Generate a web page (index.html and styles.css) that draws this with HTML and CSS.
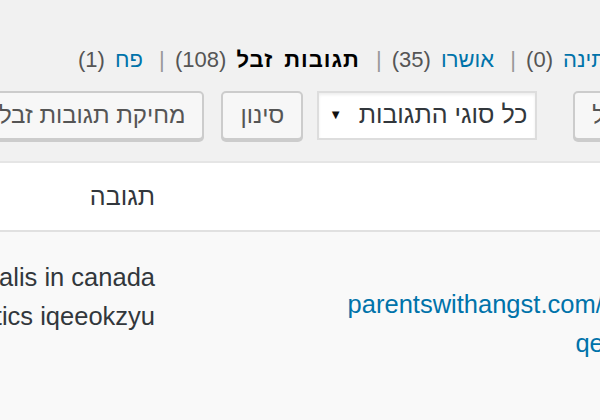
FILE: index.html
```html
<!DOCTYPE html>
<html lang="he" dir="rtl">

<head>
    <meta charset="UTF-8">
    <meta name="viewport" content="width=device-width, initial-scale=1.0">
    <title>תגובות</title>
    <link rel="stylesheet" href="styles.css">
</head>

<body>
    <div class="wrap">
        <ul class="subsubsub">
            <li><a href="#">הכל <span class="count">(144)</span></a> <span class="sep">|</span></li>
            <li><a href="#">ממתינה <span class="count">(0)</span></a> <span class="sep">|</span></li>
            <li><a href="#">אושרו <span class="count">(35)</span></a> <span class="sep">|</span></li>
            <li><a href="#" class="current"><b>תגובות זבל</b> <span class="count">(108)</span></a> <span class="sep">|</span></li>
            <li><a href="#">פח <span class="count">(1)</span></a></li>
        </ul>

        <div class="tablenav">
            <div class="actions">
                <div class="select bulk"><span>פעולות קבוצתיות</span><span class="arrow">▼</span></div>
                <button class="button">החל</button>
            </div>
            <div class="actions">
                <div class="select filter"><span>כל סוגי התגובות</span><span class="arrow">▼</span></div>
                <button class="button">סינון</button>
                <button class="button">מחיקת תגובות זבל</button>
            </div>
        </div>

        <table class="widefat">
            <colgroup>
                <col class="col-check">
                <col class="col-author">
                <col>
            </colgroup>
            <thead>
                <tr>
                    <th></th>
                    <th>מחבר</th>
                    <th>תגובה</th>
                </tr>
            </thead>
            <tbody>
                <tr class="alternate">
                    <td></td>
                    <td class="column-author">
                        <strong>iqeeokzyu</strong><br>
                        <a href="#">parentswithangst.com/cheap-cialis-buy</a><br>
                        <a href="#">qeeokzyu@mail.ru</a><br>
                        <a href="#">185.93.181.12</a>
                    </td>
                    <td class="column-comment">
                        <p>buy generic cialis in canada<br>erectile dysfunction statistics iqeeokzyu</p>
                    </td>
                </tr>
            </tbody>
        </table>
    </div>
</body>

</html>
```

FILE: styles.css
```css
html,
body {
    margin: 0;
    padding: 0;
    overflow: hidden;
}

body {
    width: 600px;
    height: 420px;
    background-color: #f1f1f1;
    color: #444;
    font-family: "Liberation Sans", Arial, sans-serif;
    font-size: 22px;
}

a {
    color: #0073aa;
    text-decoration: none;
}

.wrap {
    margin: 0 -256px 0 -40px;
}

/* status filter line */
.subsubsub {
    list-style: none;
    margin: 0;
    padding: 44px 0 0 118px;
    text-align: left;
    line-height: 32px;
    color: #666;
    white-space: nowrap;
    word-spacing: 4px;
}

.subsubsub li {
    display: inline;
}

.subsubsub .sep {
    margin-left: 6px;
    color: #999;
}

.subsubsub .count {
    color: #555;
}

.subsubsub .current {
    color: #000;
}

.subsubsub .current b {
    letter-spacing: 1px;
}

/* buttons row */
.tablenav {
    display: flex;
    gap: 36px;
    margin-top: 15px;
    height: 49px;
}

.actions {
    display: flex;
    gap: 14px;
}

.actions .button:last-child {
    margin-right: 3px;
}

.button,
.select {
    box-sizing: border-box;
    height: 49px;
    font-family: inherit;
    white-space: nowrap;
}

.button {
    padding: 0 17px 2px;
    font-size: 24px;
    background-color: #f7f7f7;
    border: 2px solid #ccc;
    border-radius: 5px;
    box-shadow: 0 2px 0 #ccc;
    color: #555;
}

.select {
    display: flex;
    align-items: center;
    justify-content: space-between;
    padding: 0 8px 2px 10px;
    font-size: 25px;
    background-color: #fff;
    border: 2px solid #ddd;
    box-shadow: inset 0 2px 3px rgba(0, 0, 0, 0.07);
    color: #32373c;
    overflow: hidden;
}

.select .arrow {
    font-size: 13px;
    color: #111;
}

.bulk {
    width: 184px;
}

.filter {
    width: 220px;
}

/* comments table */
.widefat {
    width: 100%;
    margin-top: 21px;
    table-layout: fixed;
    border-spacing: 0;
    border: 2px solid #e5e5e5;
    background-color: #fff;
    font-size: 25.5px;
}

.col-check {
    width: 50px;
}

.col-author {
    width: 632px;
}

.widefat th {
    padding: 14px 17px;
    line-height: 39px;
    font-size: 25px;
    font-weight: normal;
    text-align: right;
    color: #32373c;
    border-bottom: 2px solid #e1e1e1;
}

.widefat td {
    padding: 14px 17px 60px;
    line-height: 39px;
    vertical-align: top;
    background-color: #f9f9f9;
    color: #32373c;
    white-space: nowrap;
}

.column-author a {
    direction: ltr;
    unicode-bidi: embed;
}

.column-comment p {
    margin: 12px 0;
}
```
